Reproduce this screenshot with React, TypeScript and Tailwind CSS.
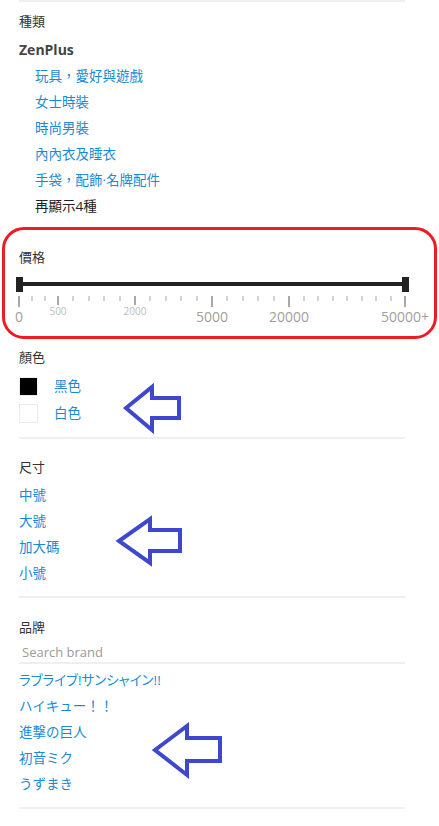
import React from "react";

const categories = ["玩具，愛好與遊戲", "女士時裝", "時尚男裝", "內內衣及睡衣", "手袋，配飾·名牌配件"];
const sizes = ["中號", "大號", "加大碼", "小號"];
const brands = ["ラブライブ!サンシャイン!!", "ハイキュー！！", "進撃の巨人", "初音ミク", "うずまき"];

// tick offsets from the left end of the track, in px
const minorTicks = [
  13, 26, 54.4, 69.8, 85.2, 100.6, 131.4, 146.8, 162.2, 177.6, 208.4, 223.8, 239.2, 254.6, 284.5, 299, 313.5, 328,
  342.5, 357, 371.5,
];
const majorTicks = [
  { at: 0, label: "0", big: true },
  { at: 39, label: "500", big: false },
  { at: 116, label: "2000", big: false },
  { at: 193, label: "5000", big: true },
  { at: 270, label: "20000", big: true },
  { at: 386, label: "50000+", big: true },
];

function Heading({ children }: { children: React.ReactNode }) {
  return <p className="h-[20px] text-[13px] leading-[20px] text-[#333]">{children}</p>;
}

function Divider() {
  return <div className="h-[2px] w-[386px] bg-[#efefef]" />;
}

function PriceSlider() {
  return (
    <div className="relative mt-[8px] h-[51px] w-[386px]">
      <div className="absolute left-0 top-[7px] h-[4px] w-[386px] bg-[#222]" />
      <div className="absolute left-[-3px] top-[2px] h-[15px] w-[7px] bg-[#222]" />
      <div className="absolute left-[383px] top-[2px] h-[15px] w-[7px] bg-[#222]" />
      {minorTicks.map((x) => (
        <div key={x} className="absolute top-[21px] h-[5px] w-[2px] bg-[#d2d2d2]" style={{ left: x - 1 }} />
      ))}
      {majorTicks.map((t) => (
        <React.Fragment key={t.label}>
          <div
            className={`absolute top-[21px] w-[2px] bg-[#a8a8a8] ${t.big ? "h-[11px]" : "h-[9px]"}`}
            style={{ left: t.at - 1 }}
          />
          <span
            className={
              t.big
                ? "absolute top-[32px] -translate-x-1/2 whitespace-nowrap text-[14px] leading-[19px] text-[#a0a0a0]"
                : "absolute top-[30px] -translate-x-1/2 whitespace-nowrap text-[10px] leading-[13px] text-[#bcbcbc]"
            }
            style={{ left: t.at }}
          >
            {t.label}
          </span>
        </React.Fragment>
      ))}
    </div>
  );
}

export default function App() {
  return (
    <div className="relative min-h-[826px] w-full bg-white font-['Open_Sans','Noto_Sans_CJK_TC',sans-serif]">
      <div className="ml-[19px] w-[386px] border-t-2 border-[#efefef]">
        <div className="pt-[9px]">
          <div className="mb-[6px]">
            <Heading>種類</Heading>
          </div>
          <p className="h-[26px] text-[14px] font-bold leading-[26px] text-[#444]">ZenPlus</p>
          {categories.map((c) => (
            <p key={c} className="ml-[16px] h-[26px] text-[13.5px] leading-[26px] text-[#1a8ad4]">
              {c}
            </p>
          ))}
          <p className="ml-[16px] h-[26px] text-[13.5px] leading-[26px] text-[#222]">再顯示4種</p>
        </div>
      </div>

      <div className="ml-[2px] mt-[8px] w-[435px] rounded-[22px] border-[3px] border-[#ed1c24] pb-[10px] pl-[14px] pt-[17px]">
        <Heading>價格</Heading>
        <PriceSlider />
      </div>

      <div className="ml-[19px] w-[386px]">
        <div className="mt-[8px]">
          <Heading>顏色</Heading>
        </div>
        <div className="mt-[6px]">
          <div className="flex h-[27px] items-center">
            <span className="h-[19px] w-[19px] border border-[#eee] bg-black" />
            <span className="ml-[16px] text-[13.5px] text-[#1a8ad4]">黑色</span>
          </div>
          <div className="flex h-[27px] items-center">
            <span className="h-[19px] w-[19px] border border-[#eaeaea] bg-white" />
            <span className="ml-[16px] text-[13.5px] text-[#1a8ad4]">白色</span>
          </div>
        </div>
        <div className="mt-[10px]">
          <Divider />
        </div>

        <div className="mt-[18px]">
          <Heading>尺寸</Heading>
        </div>
        <div className="mt-[5px]">
          {sizes.map((s) => (
            <p key={s} className="h-[26px] text-[13.5px] leading-[26px] text-[#1a8ad4]">
              {s}
            </p>
          ))}
        </div>
        <div className="mt-[10px]">
          <Divider />
        </div>

        <div className="mt-[19px]">
          <Heading>品牌</Heading>
        </div>
        <input
          type="text"
          placeholder="Search brand"
          className="mt-[2px] block h-[25px] w-[386px] border-b-2 border-[#efefef] pl-[3px] pt-[2px] text-[13px] text-[#333] outline-none placeholder:text-[#9a9a9a]"
        />
        <div className="mt-[3px] font-['Open_Sans','Noto_Sans_CJK_JP',sans-serif]">
          {brands.map((b, i) => (
            <p
              key={b}
              className={`h-[26px] text-[13.5px] leading-[26px] text-[#1a8ad4] ${i === 0 ? "[font-feature-settings:'palt']" : ""}`}
            >
              {b}
            </p>
          ))}
        </div>
        <div className="mt-[10px]">
          <Divider />
        </div>
      </div>

      {/* annotation arrows drawn over the page */}
      <svg className="pointer-events-none absolute left-0 top-0" width="439" height="826" viewBox="0 0 439 826">
        <g fill="none" stroke="#3f48cc" strokeWidth="4" strokeLinejoin="miter">
          <polygon points="126,408 152,387 152,398 179,398 179,418 152,418 152,430" />
          <polygon points="119,541 150,519 150,530 180,530 180,551 150,551 150,563" />
          <polygon points="155,750 187,726 187,738 220,738 220,761 187,761 187,775" />
        </g>
      </svg>
    </div>
  );
}
